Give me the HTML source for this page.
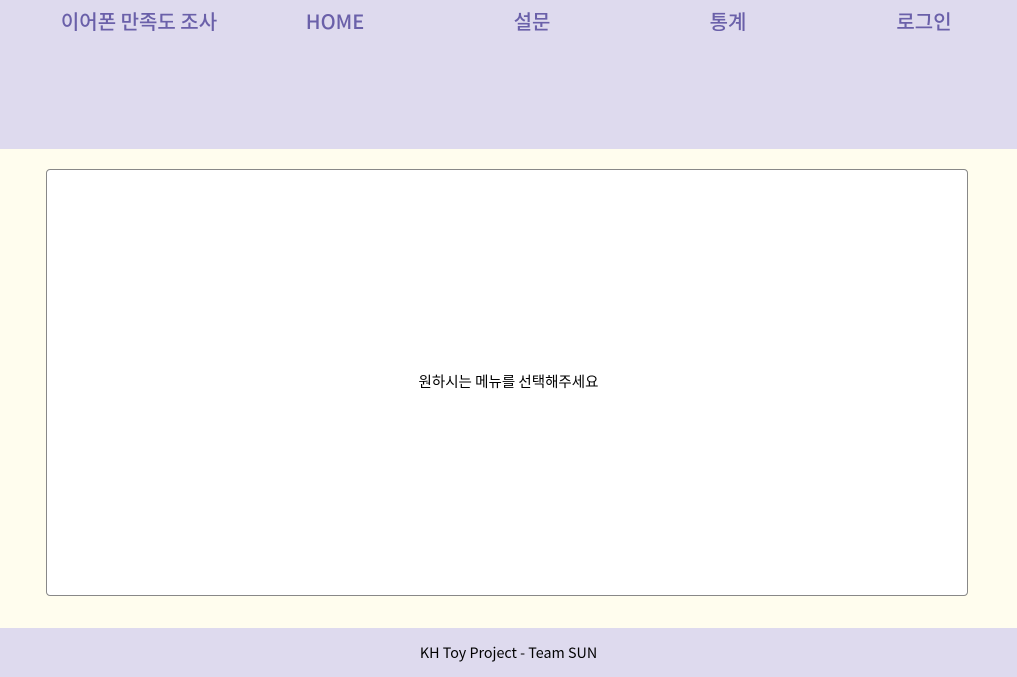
<!DOCTYPE html>
<html><head><meta charset="utf-8"><style>
body{margin:0;width:1017px;height:677px;background:#fffdee;font-family:"Noto Sans CJK KR",sans-serif;position:relative;overflow:hidden}
.hd{position:absolute;left:0;top:0;width:1017px;height:149px;background:#dedaee}
.n{position:absolute;top:7px;width:220px;margin-left:-110px;text-align:center;font-size:20px;line-height:28px;color:#6a60a9;font-weight:500}
.box{position:absolute;left:46px;top:169px;width:920px;height:425px;background:#fff;border:1px solid #888;border-radius:4px}
.msg{position:absolute;left:0;right:0;top:372px;line-height:20px;text-align:center;font-size:14.5px;color:#000}
.ft{position:absolute;left:0;top:628px;width:1017px;height:49px;background:#dedaee;text-align:center;font-size:14.3px;line-height:49px;color:#000}
</style></head><body>
<div class="hd">
<div class="n" style="left:139px">이어폰 만족도 조사</div>
<div class="n" style="left:335px">HOME</div>
<div class="n" style="left:532px">설문</div>
<div class="n" style="left:728px">통계</div>
<div class="n" style="left:924px">로그인</div>
</div>
<div class="box"></div>
<div class="msg">원하시는 메뉴를 선택해주세요</div>
<div class="ft">KH Toy Project - Team SUN</div>
</body></html>
